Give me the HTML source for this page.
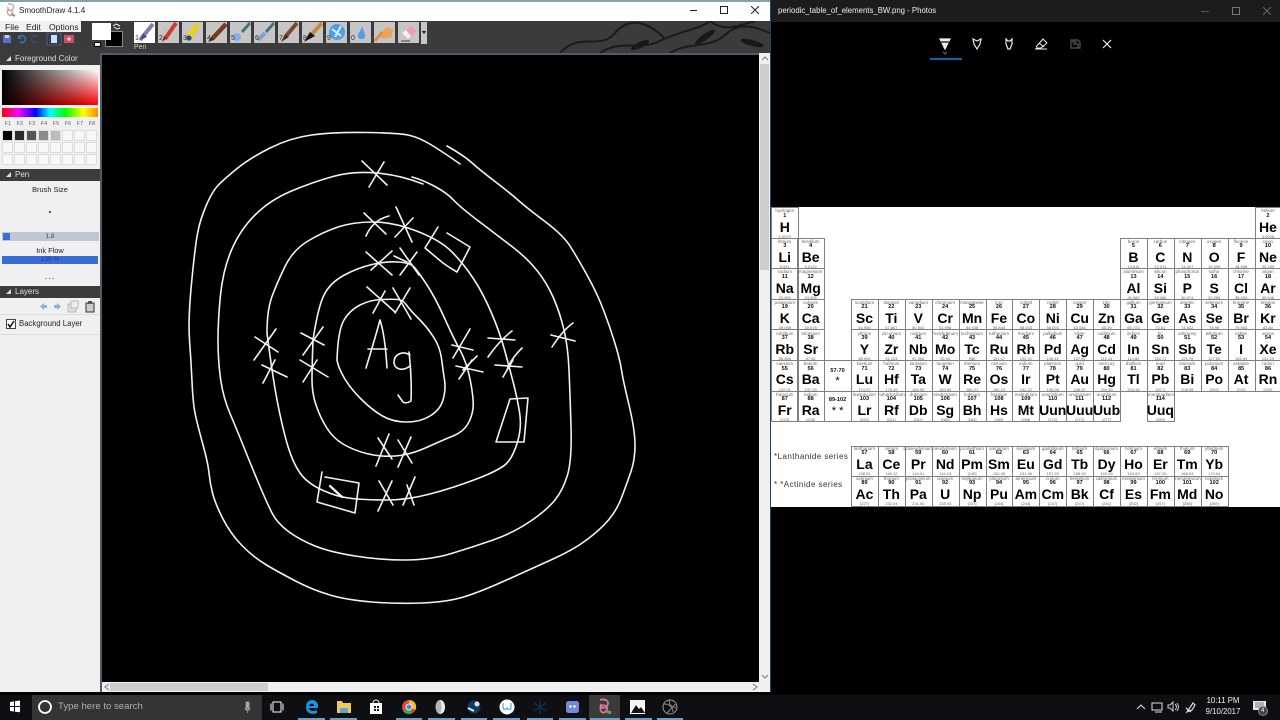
<!DOCTYPE html>
<html><head><meta charset="utf-8"><title>SmoothDraw and Photos</title>
<style>
*{box-sizing:border-box}
html,body{margin:0;padding:0;width:1280px;height:720px;overflow:hidden;background:#000;font-family:"Liberation Sans",sans-serif}
.a{position:absolute}
#win{left:0;top:0;width:770px;height:692px;background:#3a3a3a}
.hd{position:absolute;left:0;width:100px;height:12px;background:#3c3c3c;color:#ddd;font-size:8px;line-height:12px;padding-left:15px}
.hd:before{content:"";position:absolute;left:6px;top:3px;border-left:5px solid transparent;border-bottom:5px solid #ddd}
.t{position:absolute;white-space:nowrap}
.tile{position:absolute;top:22px;width:21px;height:21px;background:#c6c6c6}
.tile svg{position:absolute;left:0;top:0}
.tile span{position:absolute;left:1px;bottom:0;font-size:7px;line-height:8px;color:#333}
.sw{position:absolute;width:11px;height:11px;background:#f8f8f8;border:1px solid #ddd}
.f{position:absolute;top:121px;font-size:5.5px;width:12px;text-align:center;color:#666}
#pt{left:771px;top:207px;width:509px;height:300px;background:#fff;overflow:hidden;filter:blur(.3px)}
.e{position:absolute;width:27.9px;height:31.6px;border:1px solid #808080;margin-left:-771.7px;margin-top:-207px;color:#000;text-align:center}
.e i,.e b,.e u,.e s{position:absolute;left:-2.5px;right:-1.5px;display:block;text-decoration:none;font-style:normal;white-space:nowrap}
.e i{top:.3px;font-size:4.5px;line-height:5px;color:#666}
.e b{top:4.7px;font-size:5.6px;line-height:7px;color:#111}
.e u{top:11.4px;font-size:14px;line-height:14px;font-weight:bold}
.e s{top:25.5px;font-size:4px;line-height:5px;color:#666}
.r0 u{top:12px}.r0 b{top:5px}
.r7 u,.r8 u{top:10px}.r7 b,.r8 b{top:3.8px}.r7 i,.r8 i{top:-1px}.r7 s,.r8 s{top:24px}
.c0{left:772px}.c1{left:797.9px}.c2{left:824.8px}.c3{left:851.7px}.c4{left:878.6px}.c5{left:905.5px}.c6{left:932.4px}.c7{left:959.3px}.c8{left:986.2px}.c9{left:1013.1px}.c10{left:1040px}.c11{left:1066.9px}.c12{left:1093.8px}.c13{left:1120.7px}.c14{left:1147.6px}.c15{left:1174.5px}.c16{left:1201.4px}.c17{left:1228.3px}.c18{left:1255.2px}
.r0{top:207px}.r1{top:237.6px}.r2{top:268.2px}.r3{top:298.8px}.r4{top:329.4px}.r5{top:360px}.r6{top:390.6px}.r7{top:445.7px}.r8{top:475.7px}
#tb{left:0;top:695px;width:1280px;height:25px;background:#0d0f12}
.ul{position:absolute;top:718px;height:2px;background:#6f9dc4}
</style></head><body>

<div class="a" id="win">
<div class="a" style="left:0;top:0;width:770px;height:2px;background:#7ea5ae"></div>
<div class="a" style="left:0;top:2px;width:770px;height:19px;background:#fff"></div>
<svg class="a" style="left:5px;top:3px" width="12" height="14" viewBox="0 0 12 14"><path d="M3 1C7 0 10 3 8 6S2 7 3 4M2 8C5 6 9 8 7 11S3 12 2 8" fill="none" stroke="#d99aac" stroke-width="1.4"/><path d="M6 11l4 2" stroke="#7aa860" stroke-width="2"/></svg>
<div class="t" style="left:19px;top:5px;font-size:8px;line-height:11px;color:#222">SmoothDraw 4.1.4</div>
<div class="a" style="left:690px;top:10px;width:7px;height:1px;background:#222"></div>
<div class="a" style="left:720px;top:6px;width:8px;height:8px;border:1px solid #222"></div>
<svg class="a" style="left:751px;top:6px" width="8" height="8"><path d="M0 0L8 8M8 0L0 8" stroke="#222"/></svg>

<div class="a" style="left:0;top:21px;width:770px;height:32px;background:#3b3b3b"></div>
<svg class="a" style="left:540px;top:21px" width="230" height="32" viewBox="0 0 230 32"><g fill="none" stroke="#1a1a1a" stroke-width="2"><path d="M20 32C40 10 60 30 75 12S110 2 125 18"/><path d="M60 32C80 18 100 30 120 20S160 8 170 0"/><path d="M130 32C150 20 170 28 185 14S215 6 230 12"/><path d="M170 0C185 12 200 4 215 0"/></g><g fill="#181818"><ellipse cx="100" cy="24" rx="10" ry="3" transform="rotate(-25 100 24)"/><ellipse cx="165" cy="16" rx="12" ry="3" transform="rotate(-35 165 16)"/><ellipse cx="212" cy="22" rx="12" ry="3" transform="rotate(15 212 22)"/></g></svg>
<div class="a" style="left:0;top:21px;width:81px;height:11px;background:#f0f0f0"></div>
<div class="t" style="left:5px;top:21px;font-size:8.6px;line-height:12px;color:#222">File</div>
<div class="t" style="left:26px;top:21px;font-size:8.6px;line-height:12px;color:#222">Edit</div>
<div class="t" style="left:49px;top:21px;font-size:8.6px;line-height:12px;color:#222">Options</div>
<svg class="a" style="left:0;top:32px" width="80" height="14" viewBox="0 0 80 14">
<rect x="3" y="3" width="8" height="8" fill="#5a6fc0"/><rect x="5" y="3" width="4" height="3" fill="#ccd"/>
<path d="M19 5a3.500 3.500 0 1 1 1 5" fill="none" stroke="#3d6fb0" stroke-width="1.6"/><path d="M18 3v4h4z" fill="#3d6fb0"/>
<path d="M38 5a3.500 3.500 0 1 0-1 5" fill="none" stroke="#34506e" stroke-width="1.600"/>
<rect x="47" y="1" width="14" height="12" fill="#2c3e50" stroke="#557"/><rect x="51" y="3" width="6" height="8" fill="#cfe0f5"/>
<rect x="64" y="3" width="10" height="8" fill="#d0506a"/><path d="M67 7h4M69 5v4" stroke="#fff"/></svg>
<div class="a" style="left:105px;top:31px;width:18px;height:16px;background:#000;border:1px solid #888"></div>
<div class="a" style="left:92px;top:23px;width:19px;height:17px;background:#fff"></div>
<svg class="a" style="left:112px;top:23px" width="10" height="7"><path d="M1 3l3-2 4 2M8 5l-3 1-3-2" fill="none" stroke="#eee"/></svg>
<div class="a" style="left:94px;top:42px;width:7px;height:5px;background:#eee;border:1px solid #000"></div>

<div class="tile" style="left:134px;background:#fff"><svg width="21" height="21"><path d="M6 18L19 2" stroke="#7d82ad" stroke-width="4"/><path d="M6 18l3-7 4 4z" fill="#4a4f80"/></svg><span>1</span></div>
<div class="tile" style="left:158px"><svg width="21" height="21"><path d="M7 17L18 1" stroke="#d23a2a" stroke-width="4"/><path d="M4 20l2-6 3 2z" fill="#7a3020"/></svg><span>2</span></div>
<div class="tile" style="left:182px"><svg width="21" height="21"><path d="M7 15L16 3" stroke="#e8d020" stroke-width="6"/><circle cx="7" cy="16" r="2.600" fill="#2a4a90"/></svg><span>3</span></div>
<div class="tile" style="left:206px"><svg width="21" height="21"><path d="M6 17L20 2" stroke="#7a3a20" stroke-width="4.500"/><path d="M2 20l3-5 3 3z" fill="#333"/></svg><span>4</span></div>
<div class="tile" style="left:230px"><svg width="21" height="21"><path d="M12 10L20 1" stroke="#4a6f78" stroke-width="3"/><circle cx="7" cy="15" r="4" fill="#7fb0e8"/></svg><span>5</span></div>
<div class="tile" style="left:254px"><svg width="21" height="21"><path d="M12 10L20 1" stroke="#4a6f78" stroke-width="3"/><path d="M4 18l7-7" stroke="#7f9fd0" stroke-width="4"/></svg><span>6</span></div>
<div class="tile" style="left:278px"><svg width="21" height="21"><path d="M8 14L19 1" stroke="#7a4a30" stroke-width="4"/><path d="M3 20l4-8 4 3z" fill="#5a2a18"/></svg><span>7</span></div>
<div class="tile" style="left:302px"><svg width="21" height="21"><path d="M10 12L20 1" stroke="#c78a40" stroke-width="4"/><path d="M2 20l6-10 5 4z" fill="#111"/></svg><span>8</span></div>
<div class="tile" style="left:326px"><svg width="21" height="21"><circle cx="11" cy="10" r="8" fill="#4f9fe8"/><path d="M6 7l9 7M15 4l-6 11" stroke="#d8ecff" stroke-width="2"/></svg><span>9</span></div>
<div class="tile" style="left:350px"><svg width="21" height="21"><path d="M12 4c-1 5-5 8-4 11s7 3 7-1-2-6-3-10z" fill="#4f9fe8"/></svg><span>0</span></div>
<div class="tile" style="left:374px"><svg width="21" height="21"><path d="M5 14L12 5l7 2-1 8-9 2z" fill="#e8a65a"/><path d="M1 19L8 10" stroke="#d8914a" stroke-width="3"/></svg></div>
<div class="tile" style="left:398px"><svg width="21" height="21"><path d="M4 11l9-7 6 5-9 8z" fill="#eaa0b0"/><path d="M4 11l6 6 3-3-5-6z" fill="#f4f0f0"/><path d="M3 19h9" stroke="#444"/></svg></div>
<div class="a" style="left:421px;top:22px;width:6px;height:22px;background:#c6c6c6"></div>
<div class="a" style="left:422px;top:31px;border-left:2.500px solid transparent;border-right:2.500px solid transparent;border-top:3px solid #111"></div>
<div class="t" style="left:134px;top:43px;font-size:7px;line-height:9px;color:#ccc">Pen</div>

<div class="a" style="left:0;top:53px;width:100px;height:639px;background:#f0f0f0"></div>
<div class="hd" style="top:53px">Foreground Color</div>
<div class="a" style="left:2px;top:70px;width:96px;height:35px;background:linear-gradient(to right,#000,rgba(0,0,0,0)),linear-gradient(to bottom,#fff,#f00)"></div>
<div class="a" style="left:2px;top:108px;width:96px;height:9px;background:linear-gradient(to right,#f00,#f0f 17%,#00f 35%,#0ff 50%,#0f0 66%,#ff0 85%,#f80 100%)"></div>
<div class="f" style="left:2px">F1</div><div class="f" style="left:14px">F2</div><div class="f" style="left:26px">F3</div><div class="f" style="left:38px">F4</div><div class="f" style="left:50px">F5</div><div class="f" style="left:62px">F6</div><div class="f" style="left:74px">F7</div><div class="f" style="left:86px">F8</div>
<div class="sw" style="left:2px;top:130px;background:#000"></div><div class="sw" style="left:14px;top:130px;background:#2b2b2b"></div><div class="sw" style="left:26px;top:130px;background:#555"></div><div class="sw" style="left:38px;top:130px;background:#8a8a8a"></div><div class="sw" style="left:50px;top:130px;background:#bbb"></div><div class="sw" style="left:62px;top:130px"></div><div class="sw" style="left:74px;top:130px"></div><div class="sw" style="left:86px;top:130px"></div>
<div class="sw" style="left:2px;top:142px"></div><div class="sw" style="left:14px;top:142px"></div><div class="sw" style="left:26px;top:142px"></div><div class="sw" style="left:38px;top:142px"></div><div class="sw" style="left:50px;top:142px"></div><div class="sw" style="left:62px;top:142px"></div><div class="sw" style="left:74px;top:142px"></div><div class="sw" style="left:86px;top:142px"></div>
<div class="sw" style="left:2px;top:154px"></div><div class="sw" style="left:14px;top:154px"></div><div class="sw" style="left:26px;top:154px"></div><div class="sw" style="left:38px;top:154px"></div><div class="sw" style="left:50px;top:154px"></div><div class="sw" style="left:62px;top:154px"></div><div class="sw" style="left:74px;top:154px"></div><div class="sw" style="left:86px;top:154px"></div>
<div class="hd" style="top:169px">Pen</div>
<div class="t" style="left:0;width:100px;text-align:center;top:184px;font-size:7.4px;line-height:11px;color:#222">Brush Size</div>
<div class="a" style="left:49px;top:211px;width:2px;height:2px;background:#555"></div>
<div class="a" style="left:2px;top:232px;width:97px;height:9px;background:#c0c6d2"></div>
<div class="a" style="left:3px;top:233px;width:7px;height:7px;background:#3a6fd8"></div>
<div class="t" style="left:0;width:100px;text-align:center;top:232px;font-size:6.500px;line-height:10px;color:#445">1.8</div>
<div class="t" style="left:0;width:100px;text-align:center;top:245px;font-size:7.4px;line-height:11px;color:#222">Ink Flow</div>
<div class="a" style="left:2px;top:256px;width:96px;height:8px;background:#3a6cd6"></div>
<div class="t" style="left:0;width:100px;text-align:center;top:255px;font-size:6.500px;line-height:10px;color:#1b3f9a">100 %</div>
<div class="t" style="left:0;width:100px;text-align:center;top:271px;font-size:9px;line-height:11px;color:#333;letter-spacing:1px">...</div>
<div class="hd" style="top:286px">Layers</div>
<svg class="a" style="left:38px;top:300px" width="60" height="13" viewBox="0 0 60 13"><path d="M2 6.500L6 3v7z" fill="#8fb0d8"/><path d="M6 5h3v3H6z" fill="#8fb0d8"/><path d="M23 6.500L19 3v7z" fill="#8fb0d8"/><path d="M16 5h3v3h-3z" fill="#8fb0d8"/><rect x="30" y="4" width="8" height="8" fill="#ddd" stroke="#bbb"/><rect x="33" y="1" width="7" height="7" fill="#eee" stroke="#bbb"/><rect x="48" y="3" width="8" height="9" fill="#ccc" stroke="#333"/><rect x="50" y="1" width="4" height="3" fill="#555"/></svg>
<div class="a" style="left:0;top:314px;width:100px;height:1px;background:#ddd"></div>
<div class="a" style="left:6px;top:319px;width:10px;height:10px;background:#fff;border:1px solid #444"></div>
<svg class="a" style="left:7px;top:320px" width="8" height="8"><path d="M1 4l2 3 4-6" fill="none" stroke="#111" stroke-width="1.500"/></svg>
<div class="t" style="left:19px;top:318px;font-size:7.8px;line-height:12px;color:#222">Background Layer</div>
<div class="a" style="left:0;top:334px;width:100px;height:1px;background:#ddd"></div>

<div class="a" style="left:100px;top:53px;width:670px;height:639px;background:#f0f0f0"></div>
<div class="a" style="left:100px;top:53px;width:2px;height:639px;background:#555b66"></div>
<div class="a" style="left:100px;top:53px;width:660px;height:2px;background:#555b66"></div>
<div class="a" style="left:759px;top:53px;width:11px;height:629px;background:#f0f0f0"></div>
<div class="a" style="left:760px;top:64px;width:9px;height:206px;background:#cdcdcd"></div>
<div class="a" style="left:102px;top:682px;width:657px;height:10px;background:#f0f0f0"></div>
<div class="a" style="left:110px;top:683px;width:158px;height:8px;background:#cdcdcd"></div>
<svg class="a" style="left:102px;top:682px" width="668" height="10"><path d="M7 2L3 5l4 3M651 2l4 3-4 3" fill="none" stroke="#777"/></svg>
<svg class="a" style="left:759px;top:53px" width="11" height="630"><path d="M3 7l3-3 3 3M3 622l3 3 3-3" fill="none" stroke="#777"/></svg>
</div>

<svg class="a" style="left:102px;top:55px;background:#000" width="657" height="627" viewBox="102 55 657 627">
<g fill="none" stroke="#f2f2f2" stroke-width="1.600" stroke-linecap="round" stroke-linejoin="round">
<path d="M460 164Q443 152 431.5 145Q420 138 410 135.5Q400 133 366.5 132.5Q333 132 311.5 135Q290 138 270 148Q250 158 236.5 169Q223 180 217.5 186Q212 192 206 206Q200 220 197.5 233.5Q195 247 191.5 283.5Q188 320 189.5 340Q191 360 192 381.5Q193 403 195 413Q197 423 202.5 443Q208 463 209 473Q210 483 212.5 493Q215 503 222.5 518Q230 533 241.5 545Q253 557 266.5 565Q280 573 296.5 581.5Q313 590 330 595Q347 600 372 602Q397 604 422 603Q447 602 463.5 597Q480 592 506.500 580Q533 568 553 559Q573 550 586.5 540Q600 530 608.5 520Q617 510 622 496.5Q627 483 631 471.5Q635 460 635 445Q635 430 629 405Q623 380 621.5 370Q620 360 615 343.5Q610 327 603.5 310Q597 293 587 275Q577 257 570 246Q563 235 545 221.5Q527 208 518.5 200.5Q510 193 495 181.5Q480 170 471.5 162.5Q463 155 447 146"/>
<path d="M423 184Q400 175 376.5 173Q353 171 333 176.5Q313 182 291.5 191Q270 200 255 215Q240 230 231.5 250Q223 270 220.5 295Q218 320 218 340Q218 360 220.5 378.5Q223 397 230 413.5Q237 430 245 450Q253 470 260 486.5Q267 503 272 513Q277 523 288.5 531.5Q300 540 315 546Q330 552 355 556Q380 560 405 560Q430 560 451.5 553.5Q473 547 493 540Q513 533 530 521.5Q547 510 555 500Q563 490 567.5 475Q572 460 571 426.5Q570 393 569 370Q568 347 564 330Q560 313 553.5 298Q547 283 537 270.5Q527 258 512 246.5Q497 235 478.5 221Q460 207 453.5 200Q447 193 435 186.5Q423 180 412 177"/>
<path d="M267 333Q267 310 272 296.5Q277 283 285 266.5Q293 250 308 241Q323 232 338 227Q353 222 373 222Q393 222 416.5 231Q440 240 451.5 251.5Q463 263 473 278Q483 293 491.5 313Q500 333 505 351.5Q510 370 513.5 383.5Q517 397 519.5 412Q522 427 517.5 442Q513 457 506.5 463.5Q500 470 476.5 479Q453 488 430 494Q407 500 387 500Q367 500 352 498.5Q337 497 322 490Q307 483 300 473Q293 463 288 446.5Q283 430 278 405Q273 380 267 333"/>
<path d="M313 340Q318 307 324 295Q330 283 343.5 275.5Q357 268 372 264.5Q387 261 398.5 262Q410 263 413.5 266.5Q417 270 426 283.5Q435 297 444 317Q453 337 460 350Q467 363 470.5 381.5Q474 400 473 408.5Q472 417 467.5 424.5Q463 432 453 436Q443 440 426.5 447.5Q410 455 395 456Q380 457 366.5 453.5Q353 450 343 444Q333 438 326.5 427.5Q320 417 316 405Q312 393 312 380Q312 367 313 340"/>
<path d="M337 360Q338 330 344 320Q350 310 360 305Q370 300 381.5 299.5Q393 299 398 299.5Q403 300 406.5 305Q410 310 418.5 318.5Q427 327 433.5 337Q440 347 441.5 358.5Q443 370 444.5 380Q446 390 443 400Q440 410 430 416Q420 422 406.5 422Q393 422 382.5 416Q372 410 361 399Q350 388 344 377.5Q338 367 337 360"/>
<path d="M366 368Q376 335 380 320Q385 335 387 368M368 349H387"/>
<path d="M410 355C402 350 394 355 394 362S402 372 410 366M409 352Q412 380 411 401Q406 404 403 402L398 395"/>
<path d="M362 161L387 185M384 162L369 187M364 213L386 234M389 216Q373 220 366 236M396 207L412 242M413 218L395 237M366 252L392 275M392 251L371 270M400 248L419 275M417 252L400 275M394 256L407 262M367 287L395 312M385 291L373 313M393 288L411 319M410 288L395 313"/>
<path d="M255 337L278 352M276 329L254 360M301 333L324 345M323 327L303 355M262 365L287 377M275 360L263 383M300 360L328 377M317 360L303 382"/>
<path d="M452 345L473 350M470 329L453 358M456 366L483 372M472 360L459 379M477 356L463 370M488 338L515 340M512 331Q500 340 488 357M495 365L522 367M522 348Q510 360 507 370M513 360L503 377M551 335L575 341M573 323Q563 330 552 347"/>
<path d="M378 438L392 459M389 434L376 466M398 440L412 463M411 437L398 467M379 481L393 505M392 481L378 511M415 477L403 505M407 485L414 505"/>
<path d="M438 227L425 248 443 263Q450 268 457 272L470 247 447 233"/>
<path d="M510 399L528 398 524 442 496 442Z"/>
<path d="M322 472L317 502 355 513 359 483 325 477"/>
<path d="M330 486L342 497" stroke-width="2.400"/>
</g></svg>

<!-- Photos window -->
<div class="a" style="left:770px;top:0;width:510px;height:22px;background:#1c1c1c"></div>
<div class="a" style="left:770px;top:0;width:1px;height:692px;background:#24465c"></div>
<div class="t" style="left:778px;top:5px;font-size:7.8px;line-height:12px;color:#eee">periodic_table_of_elements_BW.png - Photos</div>
<div class="a" style="left:1201px;top:11px;width:8px;height:1px;background:#555"></div>
<div class="a" style="left:1232px;top:7px;width:8px;height:8px;border:1px solid #777"></div>
<svg class="a" style="left:1263px;top:7px" width="8" height="8"><path d="M0 0L8 8M8 0L0 8" stroke="#666"/></svg>
<svg class="a" style="left:930px;top:34px" width="190" height="26" viewBox="930 34 190 26">
<g fill="none" stroke="#eee" stroke-width="1.200">
<path d="M940 39H950L945 49Z" fill="#eee"/><path d="M941 42H949" stroke="#000"/>
<path d="M973 39L977 41 981 39 980 44 977 49 974 44Z"/>
<path d="M1006 39V44L1008 49H1010L1012 44V39L1010 41H1008Z"/>
<path d="M1036 47L1043 39 1047 43 1041 48H1036M1039 43L1044 47M1035 49H1047" stroke-width="1"/>
<path d="M1071 40H1078L1080 42V48H1071Z" stroke="#555"/><path d="M1073 44H1078V48M1073 40V42H1077" stroke="#555"/>
<path d="M1103 40L1111 48M1111 40L1103 48"/>
<path d="M943 52L945 54 947 52" stroke="#2c6fa8"/>
</g>
<rect x="929" y="58" width="33" height="2" fill="#0b66b0"/>
</svg>

<div class="a" id="pt">
<div class="e c0 r0"><i>hydrogen</i><b>1</b><u>H</u><s>1.0079</s></div>
<div class="e c18 r0"><i>helium</i><b>2</b><u>He</u><s>4.0026</s></div>
<div class="e c0 r1"><i>lithium</i><b>3</b><u>Li</u><s>6.941</s></div>
<div class="e c1 r1"><i>beryllium</i><b>4</b><u>Be</u><s>9.0122</s></div>
<div class="e c13 r1"><i>boron</i><b>5</b><u>B</u><s>10.811</s></div>
<div class="e c14 r1"><i>carbon</i><b>6</b><u>C</u><s>12.011</s></div>
<div class="e c15 r1"><i>nitrogen</i><b>7</b><u>N</u><s>14.007</s></div>
<div class="e c16 r1"><i>oxygen</i><b>8</b><u>O</u><s>15.999</s></div>
<div class="e c17 r1"><i>fluorine</i><b>9</b><u>F</u><s>18.998</s></div>
<div class="e c18 r1"><i>neon</i><b>10</b><u>Ne</u><s>20.180</s></div>
<div class="e c0 r2"><i>sodium</i><b>11</b><u>Na</u><s>22.990</s></div>
<div class="e c1 r2"><i>magnesium</i><b>12</b><u>Mg</u><s>24.305</s></div>
<div class="e c13 r2"><i>aluminium</i><b>13</b><u>Al</u><s>26.982</s></div>
<div class="e c14 r2"><i>silicon</i><b>14</b><u>Si</u><s>28.086</s></div>
<div class="e c15 r2"><i>phosphorus</i><b>15</b><u>P</u><s>30.974</s></div>
<div class="e c16 r2"><i>sulfur</i><b>16</b><u>S</u><s>32.065</s></div>
<div class="e c17 r2"><i>chlorine</i><b>17</b><u>Cl</u><s>35.453</s></div>
<div class="e c18 r2"><i>argon</i><b>18</b><u>Ar</u><s>39.948</s></div>
<div class="e c0 r3"><i>potassium</i><b>19</b><u>K</u><s>39.098</s></div>
<div class="e c1 r3"><i>calcium</i><b>20</b><u>Ca</u><s>40.078</s></div>
<div class="e c3 r3"><i>scandium</i><b>21</b><u>Sc</u><s>44.956</s></div>
<div class="e c4 r3"><i>titanium</i><b>22</b><u>Ti</u><s>47.867</s></div>
<div class="e c5 r3"><i>vanadium</i><b>23</b><u>V</u><s>50.942</s></div>
<div class="e c6 r3"><i>chromium</i><b>24</b><u>Cr</u><s>51.996</s></div>
<div class="e c7 r3"><i>manganese</i><b>25</b><u>Mn</u><s>54.938</s></div>
<div class="e c8 r3"><i>iron</i><b>26</b><u>Fe</u><s>55.845</s></div>
<div class="e c9 r3"><i>cobalt</i><b>27</b><u>Co</u><s>58.933</s></div>
<div class="e c10 r3"><i>nickel</i><b>28</b><u>Ni</u><s>58.693</s></div>
<div class="e c11 r3"><i>copper</i><b>29</b><u>Cu</u><s>63.546</s></div>
<div class="e c12 r3"><i>zinc</i><b>30</b><u>Zn</u><s>65.39</s></div>
<div class="e c13 r3"><i>gallium</i><b>31</b><u>Ga</u><s>69.723</s></div>
<div class="e c14 r3"><i>germanium</i><b>32</b><u>Ge</u><s>72.61</s></div>
<div class="e c15 r3"><i>arsenic</i><b>33</b><u>As</u><s>74.922</s></div>
<div class="e c16 r3"><i>selenium</i><b>34</b><u>Se</u><s>78.96</s></div>
<div class="e c17 r3"><i>bromine</i><b>35</b><u>Br</u><s>79.904</s></div>
<div class="e c18 r3"><i>krypton</i><b>36</b><u>Kr</u><s>83.80</s></div>
<div class="e c0 r4"><i>rubidium</i><b>37</b><u>Rb</u><s>85.468</s></div>
<div class="e c1 r4"><i>strontium</i><b>38</b><u>Sr</u><s>87.62</s></div>
<div class="e c3 r4"><i>yttrium</i><b>39</b><u>Y</u><s>88.906</s></div>
<div class="e c4 r4"><i>zirconium</i><b>40</b><u>Zr</u><s>91.224</s></div>
<div class="e c5 r4"><i>niobium</i><b>41</b><u>Nb</u><s>92.906</s></div>
<div class="e c6 r4"><i>molybdenum</i><b>42</b><u>Mo</u><s>95.94</s></div>
<div class="e c7 r4"><i>technetium</i><b>43</b><u>Tc</u><s>[98]</s></div>
<div class="e c8 r4"><i>ruthenium</i><b>44</b><u>Ru</u><s>101.07</s></div>
<div class="e c9 r4"><i>rhodium</i><b>45</b><u>Rh</u><s>102.91</s></div>
<div class="e c10 r4"><i>palladium</i><b>46</b><u>Pd</u><s>106.42</s></div>
<div class="e c11 r4"><i>silver</i><b>47</b><u>Ag</u><s>107.87</s></div>
<div class="e c12 r4"><i>cadmium</i><b>48</b><u>Cd</u><s>112.41</s></div>
<div class="e c13 r4"><i>indium</i><b>49</b><u>In</u><s>114.82</s></div>
<div class="e c14 r4"><i>tin</i><b>50</b><u>Sn</u><s>118.71</s></div>
<div class="e c15 r4"><i>antimony</i><b>51</b><u>Sb</u><s>121.76</s></div>
<div class="e c16 r4"><i>tellurium</i><b>52</b><u>Te</u><s>127.60</s></div>
<div class="e c17 r4"><i>iodine</i><b>53</b><u>I</u><s>126.90</s></div>
<div class="e c18 r4"><i>xenon</i><b>54</b><u>Xe</u><s>131.29</s></div>
<div class="e c0 r5"><i>caesium</i><b>55</b><u>Cs</u><s>132.91</s></div>
<div class="e c1 r5"><i>barium</i><b>56</b><u>Ba</u><s>137.33</s></div>
<div class="e c2 r5"><b style="top:6.5px">57-70</b><u style="top:13px;font-weight:normal;font-size:11px">*</u></div>
<div class="e c3 r5"><i>lutetium</i><b>71</b><u>Lu</u><s>174.97</s></div>
<div class="e c4 r5"><i>hafnium</i><b>72</b><u>Hf</u><s>178.49</s></div>
<div class="e c5 r5"><i>tantalum</i><b>73</b><u>Ta</u><s>180.95</s></div>
<div class="e c6 r5"><i>tungsten</i><b>74</b><u>W</u><s>183.84</s></div>
<div class="e c7 r5"><i>rhenium</i><b>75</b><u>Re</u><s>186.21</s></div>
<div class="e c8 r5"><i>osmium</i><b>76</b><u>Os</u><s>190.23</s></div>
<div class="e c9 r5"><i>iridium</i><b>77</b><u>Ir</u><s>192.22</s></div>
<div class="e c10 r5"><i>platinum</i><b>78</b><u>Pt</u><s>195.08</s></div>
<div class="e c11 r5"><i>gold</i><b>79</b><u>Au</u><s>196.97</s></div>
<div class="e c12 r5"><i>mercury</i><b>80</b><u>Hg</u><s>200.59</s></div>
<div class="e c13 r5"><i>thallium</i><b>81</b><u>Tl</u><s>204.38</s></div>
<div class="e c14 r5"><i>lead</i><b>82</b><u>Pb</u><s>207.2</s></div>
<div class="e c15 r5"><i>bismuth</i><b>83</b><u>Bi</u><s>208.98</s></div>
<div class="e c16 r5"><i>polonium</i><b>84</b><u>Po</u><s>[209]</s></div>
<div class="e c17 r5"><i>astatine</i><b>85</b><u>At</u><s>[210]</s></div>
<div class="e c18 r5"><i>radon</i><b>86</b><u>Rn</u><s>[222]</s></div>
<div class="e c0 r6"><i>francium</i><b>87</b><u>Fr</u><s>[223]</s></div>
<div class="e c1 r6"><i>radium</i><b>88</b><u>Ra</u><s>[226]</s></div>
<div class="e c2 r6"><b style="top:5px">89-102</b><u style="top:12px;font-weight:normal;font-size:11px">* *</u></div>
<div class="e c3 r6"><i>lawrencium</i><b>103</b><u>Lr</u><s>[262]</s></div>
<div class="e c4 r6"><i>rutherfordium</i><b>104</b><u>Rf</u><s>[261]</s></div>
<div class="e c5 r6"><i>dubnium</i><b>105</b><u>Db</u><s>[262]</s></div>
<div class="e c6 r6"><i>seaborgium</i><b>106</b><u>Sg</u><s>[266]</s></div>
<div class="e c7 r6"><i>bohrium</i><b>107</b><u>Bh</u><s>[264]</s></div>
<div class="e c8 r6"><i>hassium</i><b>108</b><u>Hs</u><s>[269]</s></div>
<div class="e c9 r6"><i>meitnerium</i><b>109</b><u>Mt</u><s>[268]</s></div>
<div class="e c10 r6"><i>ununnilium</i><b>110</b><u>Uun</u><s>[271]</s></div>
<div class="e c11 r6"><i>unununium</i><b>111</b><u>Uuu</u><s>[272]</s></div>
<div class="e c12 r6"><i>ununbium</i><b>112</b><u>Uub</u><s>[277]</s></div>
<div class="e c14 r6"><i>ununquadium</i><b>114</b><u>Uuq</u><s>[289]</s></div>
<div class="t" style="left:3px;top:244px;font-size:8px;line-height:11px;color:#333;letter-spacing:.45px">*Lanthanide series</div>
<div class="t" style="left:3px;top:272px;font-size:8px;line-height:11px;color:#333;letter-spacing:.45px">* *Actinide series</div>
<div class="e c3 r7"><i>lanthanum</i><b>57</b><u>La</u><s>138.91</s></div>
<div class="e c4 r7"><i>cerium</i><b>58</b><u>Ce</u><s>140.12</s></div>
<div class="e c5 r7"><i>praseodymium</i><b>59</b><u>Pr</u><s>140.91</s></div>
<div class="e c6 r7"><i>neodymium</i><b>60</b><u>Nd</u><s>144.24</s></div>
<div class="e c7 r7"><i>promethium</i><b>61</b><u>Pm</u><s>[145]</s></div>
<div class="e c8 r7"><i>samarium</i><b>62</b><u>Sm</u><s>150.36</s></div>
<div class="e c9 r7"><i>europium</i><b>63</b><u>Eu</u><s>151.96</s></div>
<div class="e c10 r7"><i>gadolinium</i><b>64</b><u>Gd</u><s>157.25</s></div>
<div class="e c11 r7"><i>terbium</i><b>65</b><u>Tb</u><s>158.93</s></div>
<div class="e c12 r7"><i>dysprosium</i><b>66</b><u>Dy</u><s>162.50</s></div>
<div class="e c13 r7"><i>holmium</i><b>67</b><u>Ho</u><s>164.93</s></div>
<div class="e c14 r7"><i>erbium</i><b>68</b><u>Er</u><s>167.26</s></div>
<div class="e c15 r7"><i>thulium</i><b>69</b><u>Tm</u><s>168.93</s></div>
<div class="e c16 r7"><i>ytterbium</i><b>70</b><u>Yb</u><s>173.04</s></div>
<div class="e c3 r8"><i>actinium</i><b>89</b><u>Ac</u><s>[227]</s></div>
<div class="e c4 r8"><i>thorium</i><b>90</b><u>Th</u><s>232.04</s></div>
<div class="e c5 r8"><i>protactinium</i><b>91</b><u>Pa</u><s>231.04</s></div>
<div class="e c6 r8"><i>uranium</i><b>92</b><u>U</u><s>238.03</s></div>
<div class="e c7 r8"><i>neptunium</i><b>93</b><u>Np</u><s>[237]</s></div>
<div class="e c8 r8"><i>plutonium</i><b>94</b><u>Pu</u><s>[244]</s></div>
<div class="e c9 r8"><i>americium</i><b>95</b><u>Am</u><s>[243]</s></div>
<div class="e c10 r8"><i>curium</i><b>96</b><u>Cm</u><s>[247]</s></div>
<div class="e c11 r8"><i>berkelium</i><b>97</b><u>Bk</u><s>[247]</s></div>
<div class="e c12 r8"><i>californium</i><b>98</b><u>Cf</u><s>[251]</s></div>
<div class="e c13 r8"><i>einsteinium</i><b>99</b><u>Es</u><s>[252]</s></div>
<div class="e c14 r8"><i>fermium</i><b>100</b><u>Fm</u><s>[257]</s></div>
<div class="e c15 r8"><i>mendelevium</i><b>101</b><u>Md</u><s>[258]</s></div>
<div class="e c16 r8"><i>nobelium</i><b>102</b><u>No</u><s>[259]</s></div>
</div>

<!-- Taskbar -->
<div class="a" id="tb"></div>
<div class="a" style="left:32px;top:695px;width:230px;height:25px;background:#343434"></div>
<svg class="a" style="left:0;top:695px" width="700" height="25" viewBox="0 695 700 25">
<path d="M10 702L14 701.400V706H10ZM15 701.200L20 700.500V706H15ZM10 707H14V711.500L10 711ZM15 707H20V712.300L15 711.700Z" fill="#fff"/>
<circle cx="45" cy="707" r="6" fill="none" stroke="#fff" stroke-width="1.800"/>
<path d="M246 702h3v7h-3zM245 708c0 3 5 3 5 0M247.500 711v2" fill="#aaa" stroke="#aaa" stroke-width=".7"/>
<path d="M273 702h8v10h-8zM271 703.500v7M283 703.500v7" fill="none" stroke="#fff"/>
<path d="M306 707c0-5 3-7 6-7s6 2 6 6v2h-9c0 3 5 4 8 2v3c-4 2-11 1-11-6zm3-1h5c0-3-4-3-5 0z" fill="#1f8fe0"/>
<path d="M337 701h5l1 2h8v10h-14z" fill="#f0c75e"/><rect x="340" y="708" width="8" height="5" fill="#5fa8c8"/>
<path d="M370 703h12v11h-12z" fill="#fff"/><path d="M373 703c0-4 6-4 6 0" fill="none" stroke="#fff"/><path d="M374 706h2v2h-2zM377 706h2v2h-2zM374 709h2v2h-2zM377 709h2v2h-2z" fill="#111"/>
<circle cx="409" cy="707" r="7" fill="#d9483b"/><path d="M409 707L403 711A7 7 0 0 0 412 713.300Z" fill="#3aa757"/><path d="M409 700A7 7 0 0 1 415.500 710L409 707Z" fill="#f6c026"/><circle cx="409" cy="707" r="3" fill="#4a88e8" stroke="#eee"/>
<ellipse cx="440" cy="707" rx="4.500" ry="7" fill="#b5b5b5"/><path d="M440 700c3 0 5 3 5 7s-2 7-5 7c2-3 2-11 0-14z" fill="#eee"/>
<circle cx="474" cy="707" r="6.500" fill="#123a63"/><circle cx="477" cy="704" r="2.500" fill="#dfe8f0"/><path d="M468 708l6 3" stroke="#dfe8f0" stroke-width="2"/>
<circle cx="507" cy="707" r="7.500" fill="#fff"/><path d="M503 703v4c0 3 3 3 4 1 1 2 4 2 4-1v-4" fill="none" stroke="#4aa8d8" stroke-width="1.200"/>
<path d="M540 700v14M534 703l12 8M546 703l-12 8" stroke="#142a52" stroke-width="1.500"/>
<rect x="566" y="701" width="13" height="12" rx="2.500" fill="#7289da"/><circle cx="570.500" cy="706.500" r="1.200" fill="#fff"/><circle cx="574.500" cy="706.500" r="1.200" fill="#fff"/>
<rect x="589" y="695" width="31" height="25" fill="#3a3a3a"/>
<path d="M600 700c6-2 10 2 7 6s-8 1-6-2M601 706c4-2 8 1 5 5s-7 0-5-5" fill="none" stroke="#d87a98" stroke-width="1.800"/><path d="M606 711l5 2" stroke="#6aa050" stroke-width="3"/>
<path d="M630 700h15v14h-15z" fill="#fff"/><path d="M631 713l5-8 3 4 2-2 4 6z" fill="#111"/><path d="M630.500 700.500h14v5l-3 1-3-3-4 2-4 5z" fill="#f2f2f2"/>
<circle cx="670" cy="707" r="7" fill="none" stroke="#9a9a9a"/><path d="M664 704c4 0 9 2 9 8M676 704c-4 3-6 6-9 9M670 700c-2 3 0 6 6 8" fill="none" stroke="#8a8a8a"/>
</svg>
<div class="t" style="left:58px;top:700px;font-size:9.6px;line-height:14px;color:#b0b0b0">Type here to search</div>
<div class="ul" style="left:298px;width:27px"></div><div class="ul" style="left:330px;width:27px"></div><div class="ul" style="left:396px;width:26px"></div><div class="ul" style="left:428px;width:27px"></div><div class="ul" style="left:461px;width:26px"></div><div class="ul" style="left:493px;width:27px"></div><div class="ul" style="left:527px;width:26px"></div><div class="ul" style="left:559px;width:27px"></div><div class="ul" style="left:590px;width:30px"></div><div class="ul" style="left:625px;width:27px"></div><div class="ul" style="left:657px;width:26px"></div>
<svg class="a" style="left:1130px;top:695px" width="150" height="25" viewBox="1130 695 150 25">
<path d="M1137 709l4-4 4 4" fill="none" stroke="#ddd"/>
<path d="M1152 703h10v7h-10zM1155 712h7" fill="none" stroke="#ddd"/>
<path d="M1168 705h2l3-3v9l-3-3h-2zM1175 704c2 2 2 4 0 6M1177 703c2 3 2 5 0 8" fill="none" stroke="#ccc"/>
<path d="M1187 712l6-9 2 2-3 5-3 1zM1186 708l5 4" fill="none" stroke="#ddd" stroke-width="1.200"/>
<path d="M1253 701h13v9h-5l-2 3v-3h-6z" fill="#e8e8e8"/><path d="M1255 703h9M1255 705h9M1255 707h6" stroke="#555" stroke-width=".7"/>
<circle cx="1263" cy="711" r="4.500" fill="#444" stroke="#888"/>
</svg>
<div class="t" style="left:1261px;top:707px;font-size:6px;line-height:8px;color:#fff">4</div>
<div class="t" style="left:1183px;width:80px;text-align:center;top:695px;font-size:7.8px;line-height:12px;color:#eee">10:11 PM</div>
<div class="t" style="left:1183px;width:80px;text-align:center;top:706px;font-size:7.8px;line-height:12px;color:#eee">9/10/2017</div>
</body></html>
